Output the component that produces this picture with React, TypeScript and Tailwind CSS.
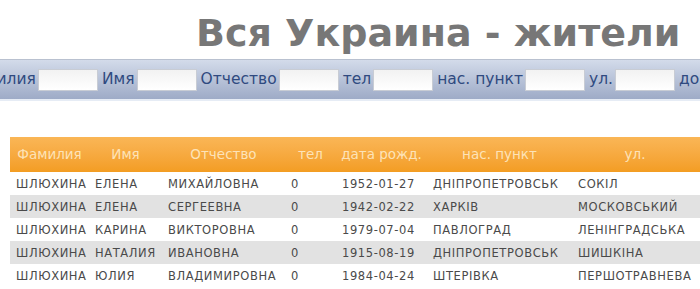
const cols = [
  { title: "Фамилия", w: "w-[79px]" },
  { title: "Имя", w: "w-[73px]" },
  { title: "Отчество", w: "w-[123px]" },
  { title: "тел", w: "w-[51px]" },
  { title: "дата рожд.", w: "w-[91px]" },
  { title: "нас. пункт", w: "w-[145px]" },
  { title: "ул.", w: "w-[126px]" },
]

const rows = [
  ["ШЛЮХИНА", "ЕЛЕНА", "МИХАЙЛОВНА", "0", "1952-01-27", "ДНІПРОПЕТРОВСЬК", "СОКІЛ"],
  ["ШЛЮХИНА", "ЕЛЕНА", "СЕРГЕЕВНА", "0", "1942-02-22", "ХАРКІВ", "МОСКОВСЬКИЙ"],
  ["ШЛЮХИНА", "КАРИНА", "ВИКТОРОВНА", "0", "1979-07-04", "ПАВЛОГРАД", "ЛЕНІНГРАДСЬКА"],
  ["ШЛЮХИНА", "НАТАЛИЯ", "ИВАНОВНА", "0", "1915-08-19", "ДНІПРОПЕТРОВСЬК", "ШИШКІНА"],
  ["ШЛЮХИНА", "ЮЛИЯ", "ВЛАДИМИРОВНА", "0", "1984-04-24", "ШТЕРІВКА", "ПЕРШОТРАВНЕВА"],
]

const filters = ["Фамилия", "Имя", "Отчество", "тел", "нас. пункт", "ул.", "дом"]

export default function App() {
  return (
    <div className="w-[700px] h-[289px] overflow-hidden bg-white font-['DejaVu_Sans',Verdana,sans-serif]">
      <div className="h-[59px] pl-[196px] pt-[11px]">
        <h1 className="text-[38px] leading-[44px] font-bold text-[#777777] whitespace-nowrap">
          Вся Украина - жители
        </h1>
      </div>

      <div className="h-[40px] border-t border-[#b9c1d0] bg-gradient-to-b from-[#d3dbea] to-[#9eabc7] overflow-hidden">
        <div className="flex items-center h-full -ml-[38px] whitespace-nowrap">
          {filters.map((f) => (
            <label key={f} className="flex items-center mr-[4px] text-[15.5px] text-[#2f4a80]">
              {f}
              <input
                type="text"
                className="ml-[2px] w-[60px] h-[22px] border border-[#c8ccd4] bg-gradient-to-b from-[#f2f2f2] to-white outline-none"
              />
            </label>
          ))}
        </div>
      </div>
      <div className="h-[2px] bg-[#e6ecf5]" />

      <div className="pt-[36px] pl-[10px]">
        <table className="table-fixed border-collapse w-[720px] text-[11.5px]">
          <thead>
            <tr className="h-[35px] bg-gradient-to-b from-[#fab656] to-[#f39d22]">
              {cols.map((c) => (
                <th key={c.title} className={`${c.w} font-normal text-[13.5px] text-[#fde3b8] text-center whitespace-nowrap`}>
                  {c.title}
                </th>
              ))}
              <th className="w-[32px]" />
            </tr>
          </thead>
          <tbody>
            {rows.map((r, i) => (
              <tr key={i} className={`h-[23px] ${i % 2 === 1 ? "bg-[#e2e2e2]" : "bg-white"}`}>
                {r.map((v, j) => (
                  <td key={j} className="pl-[6px] pt-[2px] text-left text-[#4a4a4a] tracking-[0.6px] whitespace-nowrap">
                    {v}
                  </td>
                ))}
                <td />
              </tr>
            ))}
          </tbody>
        </table>
      </div>
    </div>
  )
}
